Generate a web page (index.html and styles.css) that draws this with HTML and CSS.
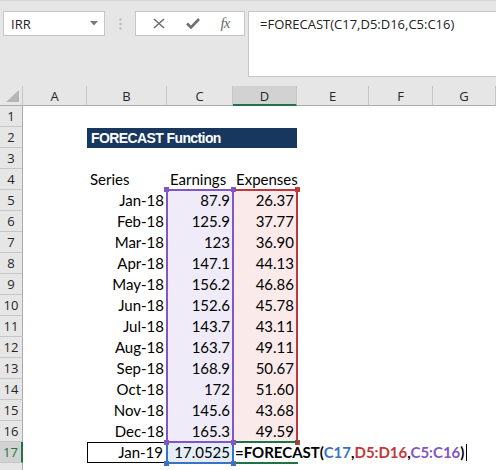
FILE: index.html
```html
<!DOCTYPE html>
<html lang="en">
<head>
    <meta charset="UTF-8">
    <title>FORECAST Function</title>
    <link rel="stylesheet" href="styles.css">
</head>
<body>

    <!-- Formula bar -->
    <div class="toolbar">
        <div class="namebox">
            <span>IRR</span>
            <svg class="caret" width="8" height="5" viewBox="0 0 8 5"><path d="M0 0H8L4 4.5Z" fill="#7a7a7a"/></svg>
        </div>
        <div class="grip">
            <svg width="3" height="12" viewBox="0 0 3 12"><rect x="0.5" y="0.5" width="2" height="2" fill="#b3b3b3"/><rect x="0.5" y="5" width="2" height="2" fill="#b3b3b3"/><rect x="0.5" y="9.5" width="2" height="2" fill="#b3b3b3"/></svg>
        </div>
        <div class="fxbox">
            <svg width="12" height="11" viewBox="0 0 12 11"><path d="M1 1L11 10M11 1L1 10" stroke="#707070" stroke-width="1.6" fill="none"/></svg>
            <svg width="14" height="11" viewBox="0 0 14 11"><path d="M1 5.5L5 9.5L13 1" stroke="#707070" stroke-width="2.6" fill="none"/></svg>
            <span class="fx">fx</span>
        </div>
        <div class="formula">=FORECAST(C17,D5:D16,C5:C16)</div>
    </div>

    <!-- Worksheet -->
    <div class="sheet">
        <div class="grid" id="grid"></div>

        <!-- range highlights drawn over the cells -->
        <div class="marks">
            <div class="rng rng-c"><i class="h tl"></i><i class="h tr"></i><i class="h bl"></i><i class="h br"></i></div>
            <div class="rng rng-d"><i class="h tr"></i><i class="h br"></i></div>
            <div class="rng rng-c17"><i class="h bl"></i><i class="h br"></i></div>
            <div class="rng rng-d17"></div>
        </div>
    </div>

    <script>
        const cols = ['A', 'B', 'C', 'D', 'E', 'F', 'G'];
        const data = [
            ['Jan-18', '87.9', '26.37'],
            ['Feb-18', '125.9', '37.77'],
            ['Mar-18', '123', '36.90'],
            ['Apr-18', '147.1', '44.13'],
            ['May-18', '156.2', '46.86'],
            ['Jun-18', '152.6', '45.78'],
            ['Jul-18', '143.7', '43.11'],
            ['Aug-18', '163.7', '49.11'],
            ['Sep-18', '168.9', '50.67'],
            ['Oct-18', '172', '51.60'],
            ['Nov-18', '145.6', '43.68'],
            ['Dec-18', '165.3', '49.59']
        ];

        const grid = document.getElementById('grid');
        let html = '<div class="corner"><svg width="13" height="12" viewBox="0 0 13 12"><path d="M13 0V12H0Z" fill="#b5b5b5"/></svg></div>';
        cols.forEach(c => {
            html += `<div class="colhead${c === 'D' ? ' active' : ''}">${c}</div>`;
        });

        // row header + the cells of one row
        function row(n, cells, active) {
            return `<div class="rowhead${active ? ' active' : ''}">${n}</div>` + cells;
        }

        const blank = n => '<div class="cell"></div>'.repeat(n);

        html += row(1, blank(7));
        html += row(2, blank(1) + '<div class="cell title">FORECAST Function</div>' + blank(3));
        html += row(3, blank(7));
        html += row(4, blank(1) + '<div class="cell">Series</div><div class="cell">Earnings</div><div class="cell">Expenses</div>' + blank(3));

        data.forEach((d, i) => {
            html += row(i + 5, blank(1) +
                `<div class="cell num">${d[0]}</div>` +
                `<div class="cell num fill-c">${d[1]}</div>` +
                `<div class="cell num fill-d">${d[2]}</div>` + blank(3));
        });

        html += row(17, blank(1) +
            '<div class="cell num boxed">Jan-19</div>' +
            '<div class="cell num fill-c17">17.0525</div>' +
            '<div class="cell edit">=FORECAST(<span class="ref-b">C17</span>,<span class="ref-r">D5:D16</span>,<span class="ref-p">C5:C16</span>)<span class="cursor"></span></div>' +
            blank(3), true);
        html += row('', blank(7));  // row 18, only its top edge shows

        grid.innerHTML = html;
    </script>
</body>
</html>
```

FILE: styles.css
```css
/* page */
body {
    margin: 0;
    width: 496px;
    height: 470px;
    overflow: hidden;
    background: #e6e6e6;
    font-family: 'Open Sans', 'Noto Sans', sans-serif;
    color: #222;
}

/* formula bar */
.toolbar {
    height: 86px;
    box-sizing: border-box;
    padding-top: 10px;
    display: flex;
    align-items: flex-start;
    border-top: 1px solid #d6d6d6;
}

.namebox {
    margin-left: 3px;
    width: 102px;
    height: 25px;
    box-sizing: border-box;
    background: white;
    border: 1px solid #c6c6c6;
    display: flex;
    align-items: center;
    justify-content: space-between;
    padding: 0 6px 0 7px;
    font-size: 13px;
}

.grip {
    width: 30px;
    height: 25px;
    display: flex;
    align-items: center;
    justify-content: center;
}

.fxbox {
    width: 110px;
    height: 25px;
    box-sizing: border-box;
    background: white;
    border: 1px solid #c6c6c6;
    display: flex;
    align-items: center;
    justify-content: space-around;
    padding: 0 4px 0 6px;
}

.fx {
    font-family: 'Liberation Serif', serif;
    font-style: italic;
    font-size: 15px;
    color: #6a6a6a;
    letter-spacing: -1px;
}

.formula {
    flex: 1;
    margin-left: 3px;
    margin-right: -2px;
    height: 66px;
    box-sizing: border-box;
    background: white;
    border: 1px solid #c6c6c6;
    padding: 3px 0 0 11px;
    font-size: 13px;
}

/* worksheet grid */
.sheet {
    position: relative;
    background: white;
}

.grid, .marks {
    display: grid;
    grid-template-columns: 23px 64px 80px 66px 64px 72px 64px 1fr;
}

.grid {
    grid-template-rows: 20px;
    grid-auto-rows: 21px;
}

.corner, .colhead, .rowhead {
    background: #e6e6e6;
    font-size: 13px;
    color: #262626;
    box-sizing: border-box;
}

.corner {
    border-right: 1px solid #c6c6c6;
    border-bottom: 1px solid #ababab;
    display: flex;
    align-items: flex-end;
    justify-content: flex-end;
    padding: 0 3px 3px 0;
}

.colhead {
    border-right: 1px solid #c6c6c6;
    border-bottom: 1px solid #ababab;
    text-align: center;
    line-height: 20px;
}

.colhead.active {
    background: #d2d2d2;
    border-bottom: 2px solid #217346;
}

.rowhead {
    border-right: 1px solid #ababab;
    border-bottom: 1px solid #c6c6c6;
    text-align: center;
    line-height: 21px;
}

.rowhead.active {
    background: #d2d2d2;
    border-right: 2px solid #217346;
    color: #217346;
}

/* cells */
.cell {
    font-family: 'Lato', sans-serif;
    font-size: 15px;
    line-height: 21px;
    padding: 0 3px;
    color: #000;
    white-space: nowrap;
    box-sizing: border-box;
}

.num {
    text-align: right;
}

.title {
    grid-column: span 3;
    margin: 1px 0 0;
    background: #17375e;
    color: white;
    font-family: 'Liberation Sans', sans-serif;
    font-weight: bold;
    font-size: 14px;
    letter-spacing: -0.6px;
    line-height: 20px;
    padding-left: 4px;
}

.fill-c {
    background: #efebf8;
}

.fill-d {
    background: #fbeaea;
}

.fill-c17 {
    background: #e5edf8;
}

.boxed {
    border: 1px solid #000;
    line-height: 19px;
}

.edit {
    font-weight: bold;
    padding-left: 2px;
    overflow: visible;
}

.ref-b {
    color: #3b73c4;
}

.ref-r {
    color: #c3383a;
}

.ref-p {
    color: #8257c4;
}

.cursor {
    display: inline-block;
    width: 1px;
    height: 17px;
    margin-left: 2px;
    background: #000;
    vertical-align: -3px;
}

/* range highlights */
.marks {
    position: absolute;
    top: 20px;
    left: 0;
    right: 0;
    grid-auto-rows: 21px;
    pointer-events: none;
}

.rng {
    position: relative;
    margin: -1px;
    border: 2px solid;
}

.rng-c {
    grid-column: 4;
    grid-row: 5 / 17;
    border-color: #8257c4;
    z-index: 2;
}

.rng-d {
    grid-column: 5;
    grid-row: 5 / 17;
    border-color: #c3383a;
    border-left: none;
}

.rng-c17 {
    grid-column: 4;
    grid-row: 17;
    border-color: #3b73c4;
    z-index: 1;
}

.rng-d17 {
    grid-column: 5;
    grid-row: 17;
    border-color: #217346;
    border-right: none;
    border-left: none;
}

.h {
    position: absolute;
    width: 5px;
    height: 5px;
}

.rng-c .h { background: #8257c4; }
.rng-d .h { background: #c3383a; }
.rng-c17 .h { background: #3b73c4; }

.tl { left: -4px; top: -4px; }
.tr { right: -4px; top: -4px; }
.bl { left: -4px; bottom: -4px; }
.br { right: -4px; bottom: -4px; }
```
